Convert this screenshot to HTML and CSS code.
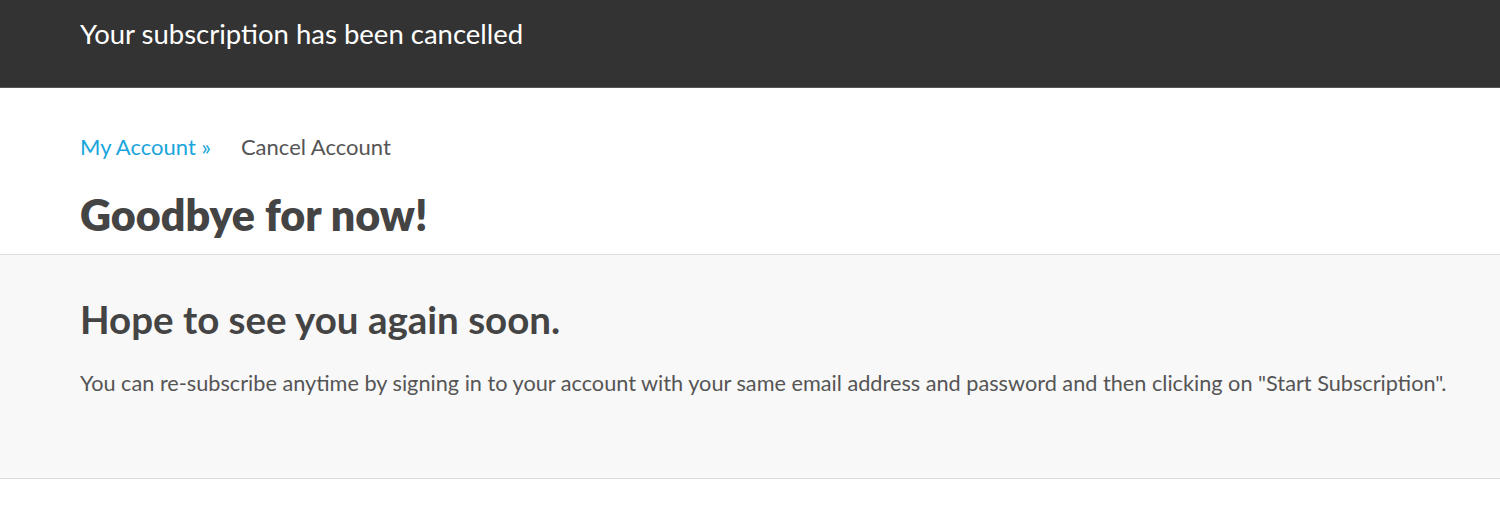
FILE: index.html
```html
<!DOCTYPE html>
<html lang="en">
<head>
<meta charset="utf-8">
<title>Cancel Account</title>
<link rel="stylesheet" href="styles.css">
</head>
<body>
<div class="notice">
  <div class="container">Your subscription has been cancelled</div>
</div>
<div class="header">
  <div class="container">
    <nav class="breadcrumb">
      <a class="crumb-link" href="#">My Account »</a>
      <span class="crumb-current">Cancel Account</span>
    </nav>
    <h1 class="title">Goodbye for now!</h1>
  </div>
</div>
<div class="panel">
  <div class="container">
    <h2 class="subtitle">Hope to see you again soon.</h2>
    <p class="text">You can re-subscribe anytime by signing in to your account with your same email address and password and then clicking on "Start Subscription".</p>
  </div>
</div>
</body>
</html>
```
FILE: styles.css
```css
html, body {
  margin: 0;
  padding: 0;
  background: #ffffff;
  font-family: Lato, "Open Sans", "Noto Sans", sans-serif;
  color: #4a4a4a;
}
.container {
  padding: 0 80px;
}
.notice {
  background: #333333;
  color: #ffffff;
  height: 88px;
  border-bottom: 1px solid #555;
  box-sizing: border-box;
}
.notice .container {
  font-size: 27.5px;
  line-height: 28px;
  padding-top: 20px;
}
.header .container {
  padding-top: 46px;
}
.breadcrumb {
  font-size: 22px;
  line-height: 26px;
  display: flex;
  gap: 30px;
}
.crumb-link {
  color: #1aa5dc;
  text-decoration: none;
}
.crumb-current {
  color: #555555;
}
.title {
  margin: 30px 0 0;
  font-size: 43px;
  line-height: 50px;
  font-weight: 800;
  color: #444444;
  padding-bottom: 14px;
}
.panel {
  background: #f8f8f8;
  border-top: 1px solid #dddddd;
  border-bottom: 1px solid #dddddd;
  height: 225px;
  box-sizing: border-box;
}
.panel .container {
  padding-top: 42px;
  padding-right: 20px;
}
.subtitle {
  margin: 0;
  font-size: 38.5px;
  line-height: 44px;
  font-weight: 700;
  color: #444444;
}
.text {
  margin: 28px 0 0;
  font-size: 21.7px;
  line-height: 28px;
  color: #555555;
  white-space: nowrap;
}
```
